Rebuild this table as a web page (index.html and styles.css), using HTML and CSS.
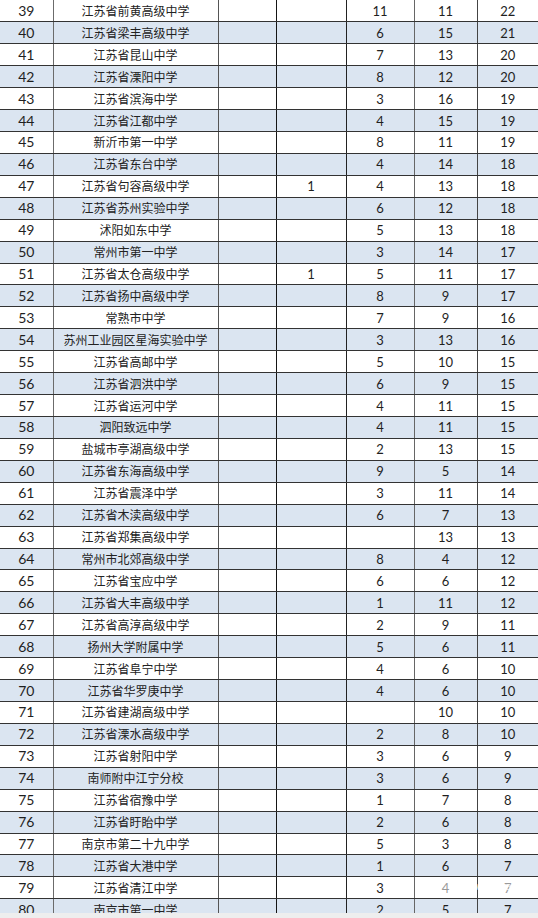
FILE: index.html
```html
<!DOCTYPE html>
<html lang="zh">
<head>
<meta charset="utf-8">
<link rel="stylesheet" href="styles.css">
</head>
<body>
<div class="sheet">
<table class="rank">
<colgroup>
<col class="c1"><col class="c2"><col class="c3"><col class="c4"><col class="c5"><col class="c6"><col class="c7">
</colgroup>
<tbody id="rows">
<tr><td>39</td><td>江苏省前黄高级中学</td><td></td><td></td><td>11</td><td>11</td><td>22</td></tr>
<tr><td>40</td><td>江苏省梁丰高级中学</td><td></td><td></td><td>6</td><td>15</td><td>21</td></tr>
<tr><td>41</td><td>江苏省昆山中学</td><td></td><td></td><td>7</td><td>13</td><td>20</td></tr>
<tr><td>42</td><td>江苏省溧阳中学</td><td></td><td></td><td>8</td><td>12</td><td>20</td></tr>
<tr><td>43</td><td>江苏省滨海中学</td><td></td><td></td><td>3</td><td>16</td><td>19</td></tr>
<tr><td>44</td><td>江苏省江都中学</td><td></td><td></td><td>4</td><td>15</td><td>19</td></tr>
<tr><td>45</td><td>新沂市第一中学</td><td></td><td></td><td>8</td><td>11</td><td>19</td></tr>
<tr><td>46</td><td>江苏省东台中学</td><td></td><td></td><td>4</td><td>14</td><td>18</td></tr>
<tr><td>47</td><td>江苏省句容高级中学</td><td></td><td>1</td><td>4</td><td>13</td><td>18</td></tr>
<tr><td>48</td><td>江苏省苏州实验中学</td><td></td><td></td><td>6</td><td>12</td><td>18</td></tr>
<tr><td>49</td><td>沭阳如东中学</td><td></td><td></td><td>5</td><td>13</td><td>18</td></tr>
<tr><td>50</td><td>常州市第一中学</td><td></td><td></td><td>3</td><td>14</td><td>17</td></tr>
<tr><td>51</td><td>江苏省太仓高级中学</td><td></td><td>1</td><td>5</td><td>11</td><td>17</td></tr>
<tr><td>52</td><td>江苏省扬中高级中学</td><td></td><td></td><td>8</td><td>9</td><td>17</td></tr>
<tr><td>53</td><td>常熟市中学</td><td></td><td></td><td>7</td><td>9</td><td>16</td></tr>
<tr><td>54</td><td>苏州工业园区星海实验中学</td><td></td><td></td><td>3</td><td>13</td><td>16</td></tr>
<tr><td>55</td><td>江苏省高邮中学</td><td></td><td></td><td>5</td><td>10</td><td>15</td></tr>
<tr><td>56</td><td>江苏省泗洪中学</td><td></td><td></td><td>6</td><td>9</td><td>15</td></tr>
<tr><td>57</td><td>江苏省运河中学</td><td></td><td></td><td>4</td><td>11</td><td>15</td></tr>
<tr><td>58</td><td>泗阳致远中学</td><td></td><td></td><td>4</td><td>11</td><td>15</td></tr>
<tr><td>59</td><td>盐城市亭湖高级中学</td><td></td><td></td><td>2</td><td>13</td><td>15</td></tr>
<tr><td>60</td><td>江苏省东海高级中学</td><td></td><td></td><td>9</td><td>5</td><td>14</td></tr>
<tr><td>61</td><td>江苏省震泽中学</td><td></td><td></td><td>3</td><td>11</td><td>14</td></tr>
<tr><td>62</td><td>江苏省木渎高级中学</td><td></td><td></td><td>6</td><td>7</td><td>13</td></tr>
<tr><td>63</td><td>江苏省郑集高级中学</td><td></td><td></td><td></td><td>13</td><td>13</td></tr>
<tr><td>64</td><td>常州市北郊高级中学</td><td></td><td></td><td>8</td><td>4</td><td>12</td></tr>
<tr><td>65</td><td>江苏省宝应中学</td><td></td><td></td><td>6</td><td>6</td><td>12</td></tr>
<tr><td>66</td><td>江苏省大丰高级中学</td><td></td><td></td><td>1</td><td>11</td><td>12</td></tr>
<tr><td>67</td><td>江苏省高淳高级中学</td><td></td><td></td><td>2</td><td>9</td><td>11</td></tr>
<tr><td>68</td><td>扬州大学附属中学</td><td></td><td></td><td>5</td><td>6</td><td>11</td></tr>
<tr><td>69</td><td>江苏省阜宁中学</td><td></td><td></td><td>4</td><td>6</td><td>10</td></tr>
<tr><td>70</td><td>江苏省华罗庚中学</td><td></td><td></td><td>4</td><td>6</td><td>10</td></tr>
<tr><td>71</td><td>江苏省建湖高级中学</td><td></td><td></td><td></td><td>10</td><td>10</td></tr>
<tr><td>72</td><td>江苏省溧水高级中学</td><td></td><td></td><td>2</td><td>8</td><td>10</td></tr>
<tr><td>73</td><td>江苏省射阳中学</td><td></td><td></td><td>3</td><td>6</td><td>9</td></tr>
<tr><td>74</td><td>南师附中江宁分校</td><td></td><td></td><td>3</td><td>6</td><td>9</td></tr>
<tr><td>75</td><td>江苏省宿豫中学</td><td></td><td></td><td>1</td><td>7</td><td>8</td></tr>
<tr><td>76</td><td>江苏省盱眙中学</td><td></td><td></td><td>2</td><td>6</td><td>8</td></tr>
<tr><td>77</td><td>南京市第二十九中学</td><td></td><td></td><td>5</td><td>3</td><td>8</td></tr>
<tr><td>78</td><td>江苏省大港中学</td><td></td><td></td><td>1</td><td>6</td><td>7</td></tr>
<tr><td>79</td><td>江苏省清江中学</td><td></td><td></td><td>3</td><td class="faded">4</td><td class="faded">7</td></tr>
<tr><td>80</td><td>南京市第一中学</td><td></td><td></td><td>2</td><td>5</td><td>7</td></tr>
</tbody>
</table>
<span class="watermark">▪ www.gaokao.com</span>
</div>
<div class="strip"></div>
</body>
</html>
```

FILE: styles.css
```css
html, body {
  margin: 0;
  padding: 0;
  background: #ffffff;
}

.sheet {
  position: relative;
  width: 538px;
  height: 913px;
  overflow: hidden;
}

.strip {
  height: 5px;
  background: #eeeeee;
}

.rank {
  width: 538px;
  table-layout: fixed;
  border-collapse: collapse;
  border-spacing: 0;
  font-family: "Lato", "Liberation Sans", "Noto Sans CJK SC", sans-serif;
  font-size: 13px;
  color: #1f1f1f;
}

.c1 { width: 53px; }
.c2 { width: 165px; }
.c3 { width: 58px; }
.c4 { width: 70px; }
.c5 { width: 68px; }
.c6 { width: 63px; }
.c7 { width: 61px; }

.rank tr {
  height: 21.93px;
}

.rank tr:nth-child(even) td {
  background: #dbe5f1;
}

.rank td {
  padding: 0;
  height: 20.93px;
  text-align: center;
  vertical-align: middle;
  border-bottom: 1px solid #333333;
  line-height: 20px;
  white-space: nowrap;
  overflow: hidden;
}

.rank td:nth-child(1) { font-size: 14px; }
.rank td:nth-child(2) {
  border-left: 1px solid #6b6b6b;
  font-family: "Noto Sans CJK SC", sans-serif;
  font-size: 12px;
  color: #222222;
}
.rank td:nth-child(3) { border-left: 1px solid #555555; }
.rank td:nth-child(4) { border-left: 1px solid #151515; }
.rank td:nth-child(5) { border-left: 1px solid #222222; }
.rank td:nth-child(6) { border-left: 1px solid #666666; }
.rank td:nth-child(7) { border-left: 1px solid #444444; }

.rank td.faded {
  color: #9a9a9a;
}

.watermark {
  position: absolute;
  left: 470px;
  top: 881px;
  font-family: "Liberation Sans", sans-serif;
  font-size: 10px;
  color: rgba(255, 255, 255, 0.85);
  white-space: nowrap;
}
```
